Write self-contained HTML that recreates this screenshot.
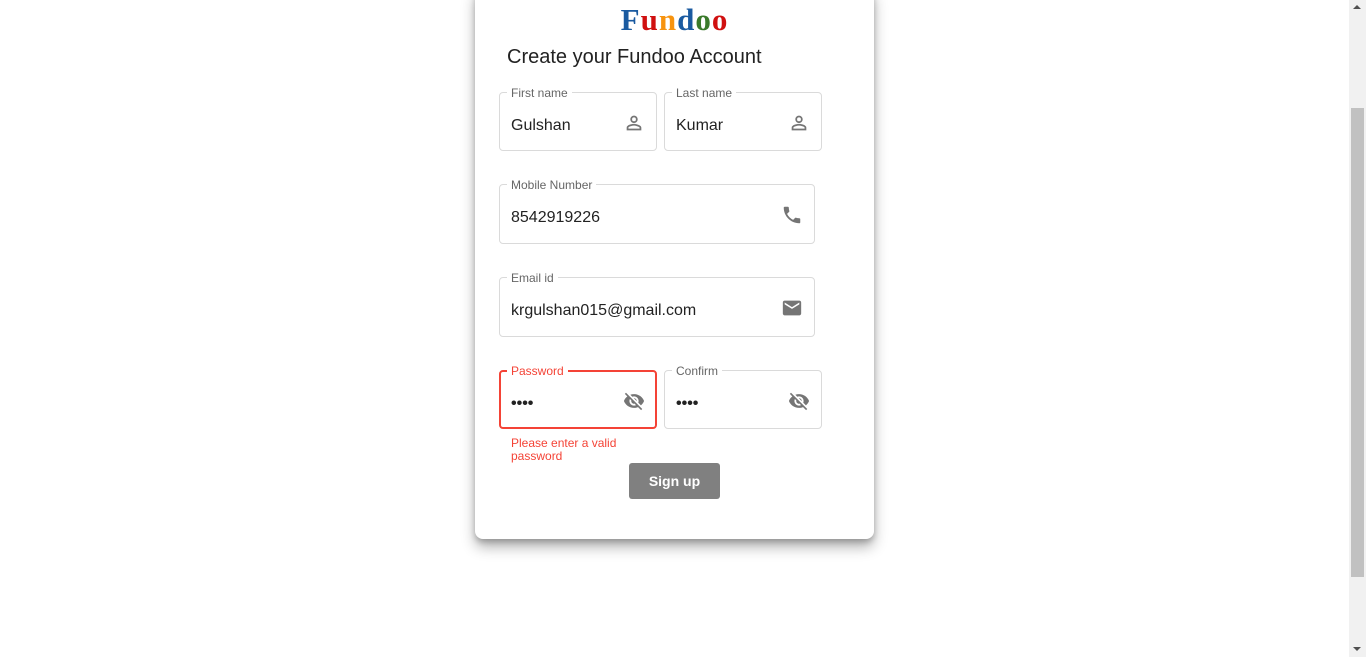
<!DOCTYPE html>
<html><head><style>
body{margin:0;width:1366px;height:657px;background:#fff;overflow:hidden;position:relative;font-family:"Liberation Sans",Arial,sans-serif}
.card{position:absolute;left:475px;top:-10px;width:399px;height:549px;background:#fff;border-radius:0 0 8px 8px;box-shadow:0 8px 14px rgba(0,0,0,.3),0 3px 6px rgba(0,0,0,.2)}
.logo{position:absolute;left:0;width:1349px;top:2px;text-align:center;font-family:"Liberation Serif",serif;font-weight:bold;font-size:31px;letter-spacing:1px}
.title{position:absolute;left:507px;top:46px;font-size:20px;color:#222}
.f{position:absolute;border:1px solid #dadada;border-radius:4px;box-sizing:border-box;height:59px}
.f .l{position:absolute;top:-7px;left:7px;padding:0 4px;background:#fff;font-size:12px;color:#666;line-height:14px}
.f .v{position:absolute;left:11px;top:24px;font-size:16px;color:#222}
.f svg{position:absolute;right:11px;top:19px;width:22px;height:22px;fill:#757575}
.err{border:2px solid #f44336}
.err .l{color:#f44336;top:-8px;left:6px}
.err .v{left:10px;top:23px}
.err svg{right:10px;top:18px}
.dots{font-size:16px;letter-spacing:0;font-weight:bold}
</style></head><body>
<div class="card"></div>
<div class="logo"><span style="color:#1a5aa0">F</span><span style="color:#d01010">u</span><span style="color:#f7930e">n</span><span style="color:#1a5aa0">d</span><span style="color:#3a7a2a">o</span><span style="color:#d01010">o</span></div>
<div class="title">Create your Fundoo Account</div>

<div class="f" style="left:499px;top:92px;width:158px"><span class="l">First name</span><span class="v">Gulshan</span><svg viewBox="0 0 24 24"><path d="M12 5.9a2.1 2.1 0 110 4.2 2.1 2.1 0 010-4.2m0 9c2.97 0 6.1 1.46 6.1 2.1v1.1H5.9V17c0-.64 3.13-2.1 6.1-2.1M12 4C9.79 4 8 5.79 8 8s1.790 4 4 4 4-1.79 4-4-1.79-4-4-4zm0 9c-2.67 0-8 1.34-8 4v3h16v-3c0-2.66-5.33-4-8-4z"/></svg></div>
<div class="f" style="left:664px;top:92px;width:158px"><span class="l">Last name</span><span class="v">Kumar</span><svg viewBox="0 0 24 24"><path d="M12 5.9a2.1 2.1 0 110 4.2 2.1 2.1 0 010-4.2m0 9c2.97 0 6.1 1.46 6.1 2.1v1.1H5.9V17c0-.64 3.13-2.1 6.1-2.1M12 4C9.79 4 8 5.79 8 8s1.79 4 4 4 4-1.79 4-4-1.79-4-4-4zm0 9c-2.67 0-8 1.34-8 4v3h16v-3c0-2.66-5.33-4-8-4z"/></svg></div>

<div class="f" style="left:499px;top:184px;width:316px;height:60px"><span class="l">Mobile Number</span><span class="v">8542919226</span><svg viewBox="0 0 24 24"><path d="M6.62 10.79c1.44 2.83 3.76 5.14 6.59 6.59l2.2-2.2c.27-.27.67-.36 1.02-.24 1.12.37 2.33.57 3.57.57.55 0 1 .45 1 1V20c0 .55-.45 1-1 1-9.39 0-17-7.61-17-17 0-.55.45-1 1-1h3.5c.55 0 1 .45 1 1 0 1.25.2 2.45.57 3.57.11.35.03.74-.25 1.02l-2.2 2.2z"/></svg></div>

<div class="f" style="left:499px;top:277px;width:316px;height:60px"><span class="l">Email id</span><span class="v">krgulshan015@gmail.com</span><svg viewBox="0 0 24 24"><path d="M20 4H4c-1.1 0-2 .9-2 2v12c0 1.1.9 2 2 2h16c1.1 0 2-.9 2-2V6c0-1.1-.9-2-2-2zm0 4l-8 5-8-5V6l8 5 8-5v2z"/></svg></div>

<div class="f err" style="left:499px;top:370px;width:158px"><span class="l">Password</span><span class="v dots">••••</span><svg viewBox="0 0 24 24"><path d="M12 7c2.76 0 5 2.24 5 5 0 .65-.13 1.26-.36 1.83l2.92 2.92c1.51-1.26 2.7-2.89 3.43-4.75-1.73-4.39-6-7.5-11-7.5-1.4 0-2.74.25-3.98.7l2.16 2.16C10.74 7.13 11.35 7 12 7zM2 4.27l2.28 2.28.46.46C3.08 8.3 1.78 10.02 1 12c1.73 4.39 6 7.5 11 7.5 1.55 0 3.03-.3 4.38-.84l.42.42L19.73 22 21 20.73 3.27 3 2 4.27zM7.53 9.8l1.55 1.55c-.05.21-.08.43-.08.65 0 1.66 1.34 3 3 3 .22 0 .44-.03.65-.08l1.55 1.55c-.67.33-1.41.53-2.2.53-2.76 0-5-2.24-5-5 0-.79.2-1.53.53-2.2zm4.31-.78l3.15 3.15.02-.16c0-1.66-1.34-3-3-3l-.17.01z"/></svg></div>
<div class="f" style="left:664px;top:370px;width:158px"><span class="l">Confirm</span><span class="v dots">••••</span><svg viewBox="0 0 24 24"><path d="M12 7c2.76 0 5 2.24 5 5 0 .65-.13 1.26-.36 1.83l2.92 2.92c1.51-1.26 2.7-2.89 3.43-4.75-1.73-4.39-6-7.5-11-7.5-1.4 0-2.74.25-3.98.7l2.16 2.16C10.74 7.13 11.35 7 12 7zM2 4.27l2.28 2.28.46.46C3.08 8.3 1.78 10.02 1 12c1.73 4.39 6 7.5 11 7.5 1.55 0 3.03-.3 4.38-.84l.42.42L19.73 22 21 20.73 3.27 3 2 4.27zM7.53 9.8l1.55 1.55c-.05.21-.08.43-.08.65 0 1.66 1.34 3 3 3 .22 0 .44-.03.65-.08l1.55 1.55c-.67.33-1.41.53-2.2.53-2.76 0-5-2.24-5-5 0-.79.2-1.530.53-2.2zm4.31-.78l3.15 3.15.02-.16c0-1.66-1.34-3-3-3l-.17.01z"/></svg></div>

<div style="position:absolute;left:511px;top:437px;font-size:12px;line-height:13px;color:#f44336;width:130px">Please enter a valid password</div>
<div style="position:absolute;left:629px;top:463px;width:91px;height:36px;background:#808080;border-radius:3px;color:#fff;font-weight:bold;font-size:14px;text-align:center;line-height:36px">Sign up</div>

<div style="position:absolute;left:1349px;top:0;width:17px;height:657px;background:#f1f1f1"></div>
<div style="position:absolute;left:1351px;top:108px;width:13px;height:469px;background:#c1c1c1"></div>
<div style="position:absolute;left:1353px;top:5px;width:0;height:0;border-left:4px solid transparent;border-right:4px solid transparent;border-bottom:4px solid #505050"></div>
<div style="position:absolute;left:1353px;top:647px;width:0;height:0;border-left:4px solid transparent;border-right:4px solid transparent;border-top:4px solid #505050"></div>
</body></html>
